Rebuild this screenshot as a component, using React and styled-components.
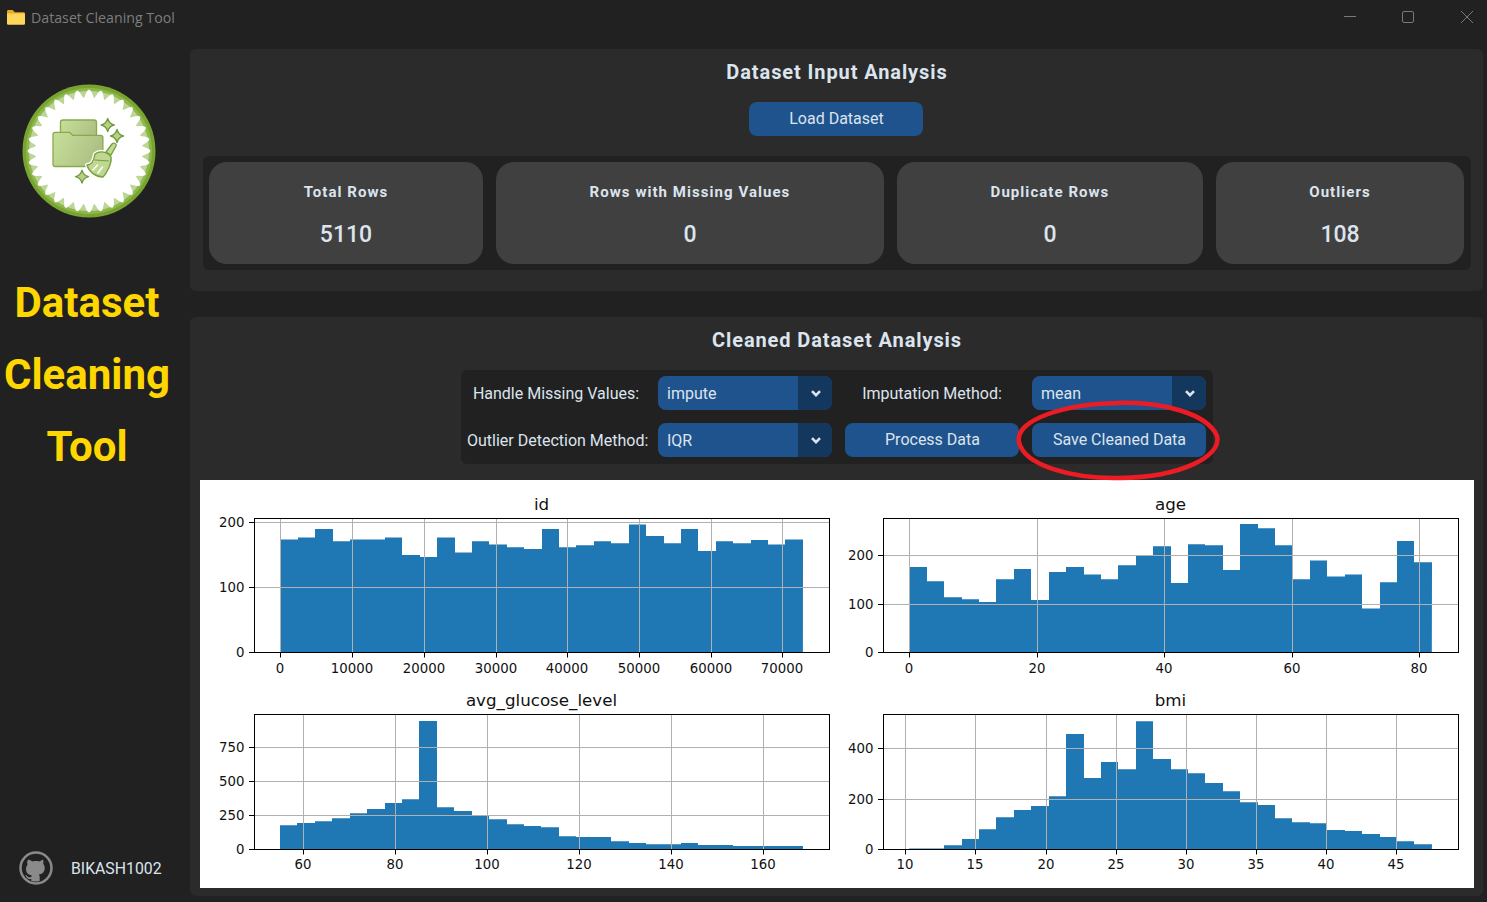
import React from "react";
import styled, { createGlobalStyle } from "styled-components";

const GlobalStyle = createGlobalStyle`
  html, body {
    margin: 0;
    padding: 0;
    background: #212121;
  }
  * {
    box-sizing: border-box;
  }
`;

const Window = styled.div`
  width: 1487px;
  height: 902px;
  display: flex;
  flex-direction: column;
  overflow: hidden;
  position: relative;
  background: #212121;
  color: #dce4ee;
  font-family: Roboto, "Liberation Sans", sans-serif;
`;

const TitleBar = styled.div`
  height: 36px;
  flex: none;
  display: flex;
  align-items: center;
  padding: 0 14px 2px 7px;
  gap: 6px;
`;

const WindowTitle = styled.span`
  flex: 1;
  font-family: "Open Sans", "Liberation Sans", sans-serif;
  font-size: 14.2px;
  color: #7d7d7d;
`;

const WindowButtons = styled.div`
  display: flex;
  gap: 46px;

  svg:nth-child(2) {
    margin-right: 1px;
  }
`;

const Body = styled.div`
  flex: 1;
  min-height: 0;
  display: flex;
`;

const Sidebar = styled.aside`
  width: 190px;
  flex: none;
  display: flex;
  flex-direction: column;
  align-items: center;
  padding: 48px 16px 16px 0;
`;

const LogoFrame = styled.div`
  height: 134px;
  margin-left: 3px;
`;

const BrandTitle = styled.h1`
  margin: 49px 0 0;
  font-size: 42px;
  font-weight: 700;
  line-height: 72px;
  text-align: center;
  color: #ffd700;
`;

const Owner = styled.div`
  margin-top: auto;
  align-self: flex-start;
  display: flex;
  align-items: center;
  gap: 17px;
  padding-left: 18px;
  font-size: 15.8px;
`;

const Main = styled.main`
  flex: 1;
  min-width: 0;
  display: flex;
  flex-direction: column;
  gap: 26px;
  padding: 13px 4px 6px 0;
`;

const Panel = styled.section`
  background: #2b2b2b;
  border-radius: 6px;
  display: flex;
  flex-direction: column;
  align-items: center;
  flex: ${(p) => (p.$grow ? 1 : "none")};
  height: ${(p) => p.$height || "auto"};
  padding: 10px 9px 0 10px;
`;

const PanelTitle = styled.h2`
  margin: 0;
  height: 26px;
  line-height: 26px;
  font-size: 20px;
  font-weight: 700;
  letter-spacing: 0.9px;
  color: #dce4ee;
`;

const ActionButton = styled.button`
  width: 174px;
  height: 34px;
  padding: 0 0 2px 1px;
  border: none;
  border-radius: 8px;
  background: #1f538d;
  color: #dce4ee;
  font-family: inherit;
  font-size: 16px;
`;

const LoadRow = styled.div`
  margin: 17px 2px 0 0;
`;

const StatStrip = styled.div`
  align-self: stretch;
  margin: 20px 3px 0;
  padding: 6px 7px 6px 6px;
  background: #212121;
  border-radius: 6px;
  display: grid;
  grid-template-columns: 274px 388px 306px 248px;
  column-gap: 13px;
`;

const StatCard = styled.div`
  height: 102px;
  background: #404040;
  border-radius: 18px;
  display: flex;
  flex-direction: column;
  align-items: center;
  padding-top: 18px;
`;

const StatLabel = styled.div`
  height: 24px;
  line-height: 24px;
  font-size: 15px;
  font-weight: 700;
  letter-spacing: 1.05px;
`;

const StatValue = styled.div`
  margin-top: 16px;
  height: 30px;
  line-height: 30px;
  font-size: 23px;
  font-weight: 500;
`;

const Controls = styled.div`
  margin-top: 17px;
  width: 752px;
  padding: 6px 7px 7px 6px;
  background: #212121;
  border-radius: 6px;
  display: grid;
  grid-template-columns: 178px 174px 174px 174px;
  grid-auto-rows: 34px;
  column-gap: 13px;
  row-gap: 13px;
  align-items: center;
`;

const FieldLabel = styled.div`
  font-size: 16px;
  text-align: center;
  white-space: nowrap;
`;

const Select = styled.div`
  height: 34px;
  display: flex;
  align-items: stretch;
  border-radius: 8px;
  overflow: hidden;
  background: #1f538d;
  font-size: 16px;
`;

const SelectValue = styled.div`
  flex: 1;
  padding-left: 9px;
  line-height: 36px;
`;

const SelectArrow = styled.div`
  width: 34px;
  padding-left: 2px;
  background: #14375e;
  display: flex;
  align-items: center;
  justify-content: center;
`;

const PlotSheet = styled.div`
  margin-top: 16px;
  align-self: stretch;
  height: 408px;
  background: #ffffff;
  display: grid;
  grid-template-columns: 637px 637px;
  grid-auto-rows: 196px;
`;

const RedCircle = styled.svg`
  position: absolute;
  left: 1012px;
  top: 396px;
  pointer-events: none;
`;

const ChartSvg = styled.svg`
  display: block;
  overflow: visible;
`;

const TickLabel = styled.text`
  font-family: "DejaVu Sans", sans-serif;
  font-size: 13.3px;
  fill: #111111;
`;

const ChartTitle = styled.text`
  font-family: "DejaVu Sans", sans-serif;
  font-size: 16.7px;
  fill: #111111;
`;

const stats = [
  { label: "Total Rows", value: "5110" },
  { label: "Rows with Missing Values", value: "0" },
  { label: "Duplicate Rows", value: "0" },
  { label: "Outliers", value: "108" },
];

const charts = [
  {
    title: "id",
    left: 54,
    bottom: 172.5,
    tickGap: 20.5,
    barStart: 80.4,
    barEnd: 602.9,
    x: (v) => 80.4 + (v * 502) / 70000,
    xTicks: [0, 10000, 20000, 30000, 40000, 50000, 60000, 70000],
    yScale: 0.65,
    yTicks: [0, 100, 200],
    bins: [174, 177, 190, 171, 174, 174, 177, 150, 147, 177, 154, 171, 166, 162, 159, 190, 162, 165, 171, 168, 197, 179, 168, 190, 156, 171, 168, 173, 166, 174],
  },
  {
    title: "age",
    left: 46,
    bottom: 172.5,
    tickGap: 20.5,
    barStart: 72.4,
    barEnd: 594.8,
    x: (v) => 72.4 + v * 6.373,
    xTicks: [0, 20, 40, 60, 80],
    yScale: 0.485,
    yTicks: [0, 100, 200],
    bins: [176, 147, 114, 110, 104, 151, 172, 108, 166, 176, 161, 151, 180, 199, 219, 143, 223, 221, 170, 265, 256, 221, 151, 190, 157, 161, 91, 145, 230, 186],
  },
  {
    title: "avg_glucose_level",
    left: 54,
    bottom: 173.5,
    tickGap: 19.5,
    barStart: 80,
    barEnd: 602.9,
    x: (v) => 103.3 + (v - 60) * 4.6,
    xTicks: [60, 80, 100, 120, 140, 160],
    yScale: 0.136,
    yTicks: [0, 250, 500, 750],
    bins: [179, 194, 208, 230, 267, 297, 341, 370, 944, 311, 282, 250, 223, 186, 172, 164, 98, 91, 91, 61, 47, 39, 39, 47, 32, 32, 25, 25, 25, 25],
  },
  {
    title: "bmi",
    left: 46,
    bottom: 173.5,
    tickGap: 19.5,
    barStart: 72.4,
    barEnd: 594.8,
    x: (v) => 68.3 + (v - 10) * 14.02,
    xTicks: [10, 15, 20, 25, 30, 35, 40, 45],
    yScale: 0.2525,
    yTicks: [0, 200, 400],
    bins: [4, 4, 17, 41, 80, 128, 156, 172, 211, 457, 283, 346, 318, 508, 358, 318, 302, 263, 231, 187, 176, 124, 108, 104, 77, 73, 61, 49, 33, 21],
  },
];

const PLOT_TOP = 38.5;
const PLOT_WIDTH = 575;

// one histogram, the same layout matplotlib gives each subplot
const Histogram = ({ chart }) => {
  const { title, left, bottom, tickGap, barStart, barEnd, x, xTicks, yScale, yTicks, bins } = chart;
  const binWidth = (barEnd - barStart) / bins.length;
  const right = left + PLOT_WIDTH;
  const y = (v) => bottom - v * yScale;
  const grid = "#b0b0b0";

  // all bars as one outline so no seams show between them
  let outline = `M${barStart} ${bottom}`;
  bins.forEach((v, i) => {
    const edge = Math.round(barStart + i * binWidth);
    const next = Math.round(barStart + (i + 1) * binWidth);
    outline += `L${edge} ${y(v).toFixed(1)}L${next} ${y(v).toFixed(1)}`;
  });
  outline += `L${barEnd} ${bottom}Z`;

  return (
    <ChartSvg width="637" height="196">
      <ChartTitle x={left + PLOT_WIDTH / 2} y="29.500" textAnchor="middle">
        {title}
      </ChartTitle>
      <path d={outline} fill="#1f77b4" />
      {xTicks.map((t) => {
        const px = Math.round(x(t)) + 0.5;
        return (
          <g key={t}>
            <line x1={px} x2={px} y1={PLOT_TOP} y2={bottom} stroke={grid} />
            <line x1={px} x2={px} y1={bottom} y2={bottom + 5} stroke="#000" />
            <TickLabel x={px - 0.5} y={bottom + tickGap} textAnchor="middle">
              {t}
            </TickLabel>
          </g>
        );
      })}
      {yTicks.map((t) => {
        const py = t === 0 ? bottom : Math.floor(y(t)) + 0.5;
        return (
          <g key={t}>
            <line x1={left} x2={right} y1={py} y2={py} stroke={grid} />
            <line x1={left - 5} x2={left} y1={py} y2={py} stroke="#000" />
            <TickLabel x={left - 9.500} y={py + 4.500} textAnchor="end">
              {t}
            </TickLabel>
          </g>
        );
      })}
      <rect
        x={left + 0.5}
        y={PLOT_TOP}
        width={PLOT_WIDTH}
        height={bottom - PLOT_TOP}
        fill="none"
        stroke="#000"
      />
    </ChartSvg>
  );
};

const FolderIcon = () => (
  <svg width="18" height="15" viewBox="0 0 18 15">
    <path d="M0 1.5C0 .7.6 0 1.4 0h4.4l2 2.2h8.8c.8 0 1.4.6 1.4 1.4V6H0z" fill="#e9a91c" />
    <rect x="0" y="3.4" width="18" height="11.4" rx="1.2" fill="#ffd65c" />
  </svg>
);

const WindowIcons = () => (
  <WindowButtons>
    <svg width="12" height="12" viewBox="0 0 12 12">
      <line x1="0" y1="5.5" x2="12" y2="5.5" stroke="#7a7a7a" />
    </svg>
    <svg width="12" height="12" viewBox="0 0 12 12">
      <rect x="0.5" y="0.5" width="11" height="11" rx="1.5" fill="none" stroke="#7a7a7a" />
    </svg>
    <svg width="12" height="12" viewBox="0 0 12 12">
      <path d="M0 0L12 12M12 0L0 12" stroke="#7a7a7a" />
    </svg>
  </WindowButtons>
);

const gearPoints = () => {
  const pts = [];
  const teeth = 32;
  for (let i = 0; i < teeth * 8; i++) {
    const a = (i / (teeth * 8)) * Math.PI * 2;
    const wave = Math.pow((Math.cos(a * teeth) + 1) / 2, 0.7);
    const r = 53 + wave * 8.5;
    pts.push(`${(67 + r * Math.cos(a)).toFixed(2)},${(67 + r * Math.sin(a)).toFixed(2)}`);
  }
  return pts.join(" ");
};

const Sparkle = ({ x, y, r }) => (
  <path
    d={`M${x} ${y - r}Q${x + r * 0.2} ${y - r * 0.2} ${x + r} ${y}Q${x + r * 0.2} ${y + r * 0.2} ${x} ${y + r}Q${x - r * 0.2} ${y + r * 0.2} ${x - r} ${y}Q${x - r * 0.2} ${y - r * 0.2} ${x} ${y - r}Z`}
    fill="#b7d08a"
    stroke="#6f9a38"
    strokeWidth="1.3"
    strokeLinejoin="round"
  />
);

const Logo = () => (
  <svg width="134" height="134" viewBox="0 0 134 134">
    <defs>
      <linearGradient id="folderFill" x1="0" y1="0" x2="1" y2="0.4">
        <stop offset="0" stopColor="#c8e09a" />
        <stop offset="1" stopColor="#adc084" />
      </linearGradient>
    </defs>
    <circle cx="67" cy="67" r="66.5" fill="#78a52f" />
    <circle cx="67" cy="67" r="63" fill="#8fb84c" />
    <circle cx="67" cy="67" r="60" fill="#bcd698" />
    <polygon points={gearPoints()} fill="#ffffff" />
    <rect x="38.5" y="36" width="36" height="24" rx="2.5" fill="url(#folderFill)" stroke="#86ab4c" strokeWidth="1.3" />
    <path
      d="M31 50.500c0-1.200 1-2.200 2.200-2.200h14.500l3 3H78.700c1.200 0 2.200 1 2.200 2.200v26.800c0 1.200-1 2.200-2.200 2.200H33.200c-1.200 0-2.200-1-2.200-2.200z"
      fill="url(#folderFill)"
      stroke="#86ab4c"
      strokeWidth="1.3"
    />
    <path
      d="M73 70C78 66 86 68 89 73C90 80 84 90 81 93C74 93 67 88 65 81C70 81 72 76 73 70Z"
      fill="#ffffff"
      stroke="#ffffff"
      strokeWidth="4"
      strokeLinejoin="round"
    />
    <path
      d="M84 68L90 60C92 58 95 60 94 62L89 71Z"
      fill="#c2da95"
      stroke="#76a03a"
      strokeWidth="1.400"
      strokeLinejoin="round"
    />
    <path
      d="M73 70C78 66 86 68 89 73C90 80 84 90 81 93C74 93 67 88 65 81C70 81 72 76 73 70Z"
      fill="#bfd791"
      stroke="#76a03a"
      strokeWidth="1.400"
      strokeLinejoin="round"
    />
    <path d="M72.500 76L87 77" stroke="#76a03a" strokeWidth="1" />
    <path d="M71 86l4.500-5M76 89l4.500-6" stroke="#ffffff" strokeWidth="1.500" strokeLinecap="round" />
    <Sparkle x={85.700} y={41} r={6.500} />
    <Sparkle x={95} y={52} r={6.500} />
    <Sparkle x={60} y={92.700} r={6.500} />
  </svg>
);

const GithubBadge = () => (
  <svg width="36" height="36" viewBox="0 0 36 36">
    <circle cx="18" cy="18" r="15.500" fill="none" stroke="#8a8a8a" strokeWidth="2.500" />
    <path
      d="M11 9.500l3.600 2c2.200-.6 4.600-.6 6.800 0l3.600-2c.5 1.500.6 3 .2 4.300 1 1.100 1.500 2.500 1.500 4.200 0 4.500-2.700 6-6 6.500.7.600 1 1.500 1 2.700V31c-3 .8-5.400.8-8.400 0v-2c-2.500.5-4-.3-5-2.300-.4-.8-1-1.300-1.600-1.600 1-.3 2 .2 2.700 1.200.7 1 1.800 1.300 3.900.8 0-.7.300-1.300.7-1.700-3.300-.5-6-2-6-6.400 0-1.700.5-3.100 1.500-4.200-.4-1.300-.3-2.800 0-4.300z"
      fill="#8a8a8a"
    />
  </svg>
);

const Chevron = () => (
  <svg width="10" height="7" viewBox="0 0 10 7">
    <path d="M1 1.200L5 5.200L9 1.200" fill="none" stroke="#dce4ee" strokeWidth="2.600" />
  </svg>
);

const Dropdown = ({ value }) => (
  <Select>
    <SelectValue>{value}</SelectValue>
    <SelectArrow>
      <Chevron />
    </SelectArrow>
  </Select>
);

const App = () => (
  <Window>
    <GlobalStyle />
    <TitleBar>
      <FolderIcon />
      <WindowTitle>Dataset Cleaning Tool</WindowTitle>
      <WindowIcons />
    </TitleBar>
    <Body>
      <Sidebar>
        <LogoFrame>
          <Logo />
        </LogoFrame>
        <BrandTitle>
          Dataset
          <br />
          Cleaning
          <br />
          Tool
        </BrandTitle>
        <Owner>
          <GithubBadge />
          BIKASH1002
        </Owner>
      </Sidebar>
      <Main>
        <Panel $height="242px">
          <PanelTitle>Dataset Input Analysis</PanelTitle>
          <LoadRow>
            <ActionButton>Load Dataset</ActionButton>
          </LoadRow>
          <StatStrip>
            {stats.map((s) => (
              <StatCard key={s.label}>
                <StatLabel>{s.label}</StatLabel>
                <StatValue>{s.value}</StatValue>
              </StatCard>
            ))}
          </StatStrip>
        </Panel>
        <Panel $grow>
          <PanelTitle>Cleaned Dataset Analysis</PanelTitle>
          <Controls>
            <FieldLabel>Handle Missing Values:</FieldLabel>
            <Dropdown value="impute" />
            <FieldLabel>Imputation Method:</FieldLabel>
            <Dropdown value="mean" />
            <FieldLabel>Outlier Detection Method:</FieldLabel>
            <Dropdown value="IQR" />
            <ActionButton>Process Data</ActionButton>
            <ActionButton>Save Cleaned Data</ActionButton>
          </Controls>
          <PlotSheet>
            {charts.map((c) => (
              <Histogram key={c.title} chart={c} />
            ))}
          </PlotSheet>
        </Panel>
      </Main>
    </Body>
    <RedCircle width="212" height="90" viewBox="0 0 212 90">
      <path
        d="M104 7C150 5 196 18 205 40C210 60 170 81 108 82C62 83 12 70 7 46C3 24 52 7 112 7"
        fill="none"
        stroke="#ed1c24"
        strokeWidth="4.500"
      />
    </RedCircle>
  </Window>
);

export default App;
